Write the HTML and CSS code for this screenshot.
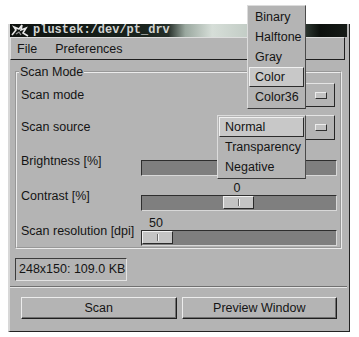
FILE: index.html
```html
<!DOCTYPE html>
<html lang="en">
<head>
  <meta charset="UTF-8" />
  <title>plustek:/dev/pt_drv</title>
  <link rel="stylesheet" href="styles.css">
</head>
<body>

<div class="window">
  <div class="titlebar">
    <svg class="title-icon" width="20" height="13" viewBox="0 0 20 13">
      <path d="M2 11 L6 6 L4 3 L9 5 L12 1 L11 6 L16 4 L13 9 L18 12" fill="none" stroke="#e8e8e8" stroke-width="1.6"/>
      <path d="M6 10 L9 8 L11 11" fill="none" stroke="#9a9a9a" stroke-width="1.2"/>
    </svg>
    <span class="title-text">plustek:/dev/pt_drv</span>
  </div>

  <div class="menubar">
    <span class="menu-item">File</span>
    <span class="menu-item">Preferences</span>
  </div>

  <div class="content">
    <fieldset class="frame">
      <legend>Scan Mode</legend>
      <div class="form-grid">

        <div class="row-label option-row">Scan mode</div>
        <div class="option-menu mode-menu open">
          <span class="option-label">Color36</span>
          <span class="indicator"></span>
          <div class="popup mode-popup">
            <div class="popup-item">Binary</div>
            <div class="popup-item">Halftone</div>
            <div class="popup-item">Gray</div>
            <div class="popup-item active">Color</div>
            <div class="popup-item">Color36</div>
          </div>
        </div>

        <div class="row-label option-row source-row">Scan source</div>
        <div class="option-menu source-menu open">
          <span class="option-label">Normal</span>
          <span class="indicator"></span>
          <div class="popup source-popup">
            <div class="popup-item active">Normal</div>
            <div class="popup-item">Transparency</div>
            <div class="popup-item">Negative</div>
          </div>
        </div>

        <div class="row-label slider-row">Brightness [%]</div>
        <div class="slider">
          <div class="slider-value"></div>
          <div class="trough"><div class="thumb" style="margin-left: 81px"></div></div>
        </div>

        <div class="row-label slider-row">Contrast [%]</div>
        <div class="slider">
          <div class="slider-value"><span style="margin-left: 81px">0</span></div>
          <div class="trough"><div class="thumb" style="margin-left: 81px"></div></div>
        </div>

        <div class="row-label slider-row">Scan resolution [dpi]</div>
        <div class="slider">
          <div class="slider-value"><span style="margin-left: 0px">50</span></div>
          <div class="trough"><div class="thumb" style="margin-left: 0px"></div></div>
        </div>

      </div>
    </fieldset>

    <div class="status">248x150: 109.0 KB</div>

    <div class="separator"></div>

    <div class="button-row">
      <button class="push-button">Scan</button>
      <button class="push-button">Preview Window</button>
    </div>
  </div>
</div>

</body>
</html>
```

FILE: styles.css
```css
body {
  margin: 0;
  background: #fff;
  font-family: "Liberation Sans", Arial, sans-serif;
  font-size: 12.5px;
  color: #141414;
}

.window {
  margin: 24px 0 0 8px;
  width: 342px;
  height: 308px;
  box-sizing: border-box;
  background: #b4b4b4;
  border-left: 2px solid #d8d8d8;
  border-right: 1px solid #222;
  border-bottom: 1px solid #222;
  padding-right: 2px;
  display: flex;
  flex-direction: column;
}

/* title bar */
.titlebar {
  height: 13px;
  display: flex;
  align-items: center;
  gap: 3px;
  background: linear-gradient(to right, #0e120f 0%, #1a241e 40%, #26302a 47%, #9aa89f 52%, #d6ded8 60%, #c0cac3 72%, #a8b4ac 82%, #2a342e 88%, #0c100d 92%, #161b17 100%);
  overflow: hidden;
}
.title-icon {
  flex: none;
}
.title-text {
  font-family: "Liberation Mono", monospace;
  font-weight: bold;
  font-size: 12px;
  line-height: 13px;
  color: #d2d4d2;
}

/* menu bar */
.menubar {
  height: 23px;
  box-sizing: border-box;
  margin-right: 2px;
  border-top: 1px solid #dedede;
  border-left: 1px solid #dedede;
  border-right: 1px solid #1e1e1e;
  border-bottom: 1px solid #1e1e1e;
  display: flex;
  align-items: center;
  gap: 18px;
  padding-left: 6px;
}

.content {
  flex: 1;
  display: flex;
  flex-direction: column;
  padding: 0 5px;
}

/* frame */
.frame {
  margin: 5px 0 0;
  padding: 4px 3px 1px 4px;
  border: 2px groove #ececec;
}
.frame legend {
  padding: 0 1px;
  margin-left: -2px;
  line-height: 14px;
}

.form-grid {
  display: grid;
  grid-template-columns: 120px 1fr;
  grid-template-rows: 24px 28px 31px 30px 30px;
  row-gap: 5px;
}

.row-label {
  align-self: end;
  white-space: nowrap;
}
.option-row { line-height: 24px; }
.source-row { line-height: 25px; }
.slider-row { line-height: 30px; }

/* option menus */
.option-menu {
  position: relative;
  align-self: end;
  justify-self: end;
  margin-right: 2px;
  box-sizing: border-box;
  display: flex;
  align-items: center;
  padding-left: 7px;
  border-top: 1px solid #e4e4e4;
  border-left: 1px solid #e4e4e4;
  border-right: 1px solid #262626;
  border-bottom: 1px solid #262626;
}
.option-menu.open .option-label {
  visibility: hidden;
}
.mode-menu {
  width: 88px;
  height: 24px;
}
.source-menu {
  width: 117px;
  height: 25px;
}
.indicator {
  margin-left: auto;
  margin-right: 7px;
  width: 12px;
  height: 7px;
  box-sizing: border-box;
  background: #c2c2c2;
  border-top: 1px solid #ececec;
  border-left: 1px solid #ececec;
  border-right: 1px solid #303030;
  border-bottom: 1px solid #303030;
}

.popup {
  position: absolute;
  z-index: 10;
  box-sizing: border-box;
  padding: 1px;
  background: #b4b4b4;
  border-top: 1px solid #dcdcdc;
  border-left: 1px solid #dcdcdc;
  border-right: 1px solid #4a4a4a;
  border-bottom: 1px solid #3a3a3a;
}
.mode-popup {
  top: -79px;
  left: -1px;
  width: 59px;
}
.source-popup {
  top: -1px;
  left: -2px;
  width: 89px;
}
.popup-item {
  height: 20px;
  line-height: 20px;
  padding-left: 6px;
  white-space: nowrap;
}
.popup-item.active {
  box-sizing: border-box;
  padding-left: 5px;
  line-height: 18px;
  background: #c8c8c8;
  border-top: 1px solid #f0f0f0;
  border-left: 1px solid #f0f0f0;
  border-right: 1px solid #2c2c2c;
  border-bottom: 1px solid #2c2c2c;
}

/* sliders */
.slider {
  align-self: end;
  display: flex;
  flex-direction: column;
}
.slider-value {
  height: 14px;
  line-height: 14px;
}
.slider-value span {
  display: inline-block;
  width: 30px;
  text-align: center;
}
.trough {
  height: 16px;
  box-sizing: border-box;
  background: #7f7f7f;
  border-top: 1px solid #2e2e2e;
  border-left: 1px solid #2e2e2e;
  border-right: 1px solid #d8d8d8;
  border-bottom: 1px solid #d8d8d8;
  display: flex;
  align-items: flex-start;
}
.thumb {
  width: 31px;
  height: 13px;
  box-sizing: border-box;
  background: #c4c4c4;
  border-top: 1px solid #f0f0f0;
  border-left: 1px solid #f0f0f0;
  border-right: 1px solid #2a2a2a;
  border-bottom: 1px solid #2a2a2a;
  display: flex;
  justify-content: center;
  align-items: center;
}
.thumb::after {
  content: "";
  width: 1px;
  height: 7px;
  background: #f4f4f4;
  border-left: 1px solid #6a6a6a;
}

/* status and buttons */
.status {
  margin-top: 9px;
  width: 112px;
  height: 23px;
  box-sizing: border-box;
  padding-left: 3px;
  line-height: 21px;
  white-space: nowrap;
  border-top: 1px solid #3c3c3c;
  border-left: 1px solid #3c3c3c;
  border-right: 1px solid #e2e2e2;
  border-bottom: 1px solid #e2e2e2;
}

.separator {
  margin: 5px -5px 0;
  border-top: 1px solid #707070;
  border-bottom: 1px solid #e6e6e6;
}

.button-row {
  margin-top: 9px;
  display: grid;
  grid-template-columns: 1fr 1fr;
  gap: 5px;
  padding: 0 5px 0 6px;
}
.push-button {
  height: 22px;
  font-family: inherit;
  font-size: 12.5px;
  color: #141414;
  background: #b4b4b4;
  border-top: 1px solid #ececec;
  border-left: 1px solid #ececec;
  border-right: 1px solid #1e1e1e;
  border-bottom: 1px solid #1e1e1e;
  box-shadow: inset -1px -1px 0 #707070;
  padding: 0;
}
```
